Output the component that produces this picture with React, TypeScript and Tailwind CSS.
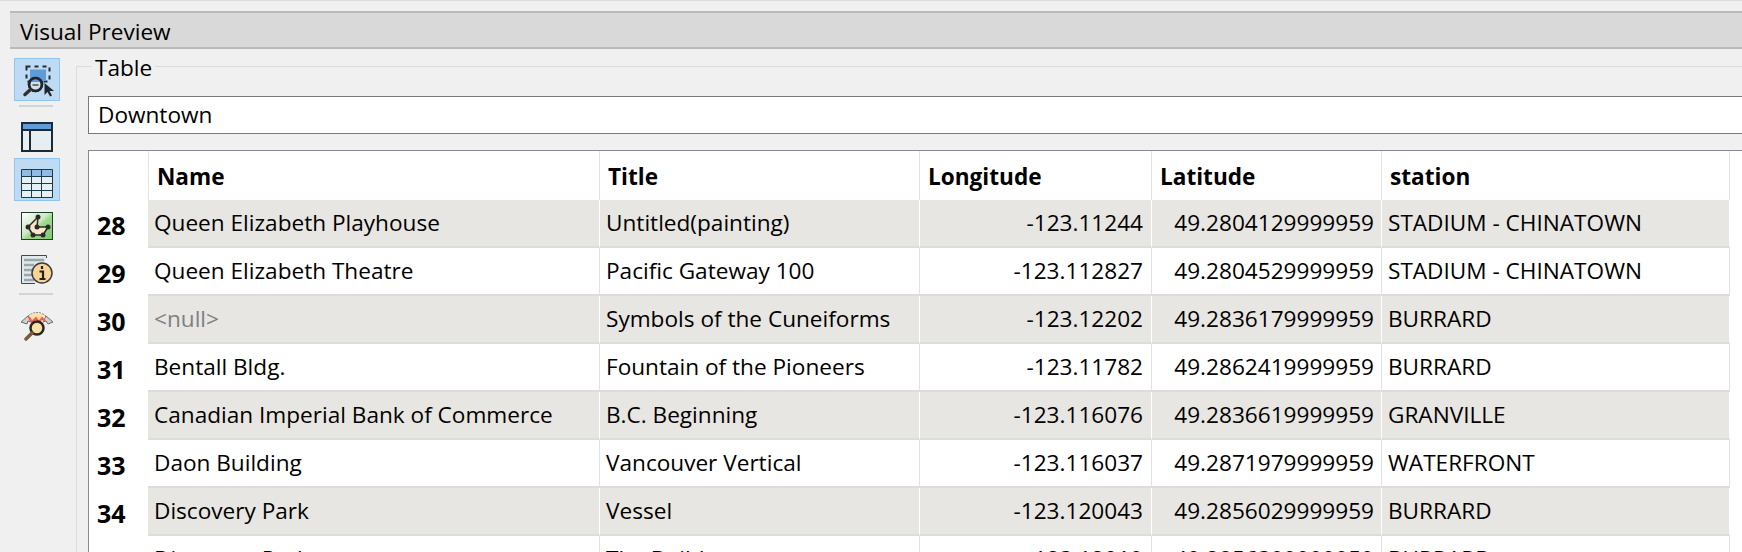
import { Fragment } from "react";

const rows = [
  ["28", "Queen Elizabeth Playhouse", "Untitled(painting)", "-123.11244", "49.2804129999959", "STADIUM - CHINATOWN"],
  ["29", "Queen Elizabeth Theatre", "Pacific Gateway 100", "-123.112827", "49.2804529999959", "STADIUM - CHINATOWN"],
  ["30", "<null>", "Symbols of the Cuneiforms", "-123.12202", "49.2836179999959", "BURRARD"],
  ["31", "Bentall Bldg.", "Fountain of the Pioneers", "-123.11782", "49.2862419999959", "BURRARD"],
  ["32", "Canadian Imperial Bank of Commerce", "B.C. Beginning", "-123.116076", "49.2836619999959", "GRANVILLE"],
  ["33", "Daon Building", "Vancouver Vertical", "-123.116037", "49.2871979999959", "WATERFRONT"],
  ["34", "Discovery Park", "Vessel", "-123.120043", "49.2856029999959", "BURRARD"],
  ["35", "Discovery Park", "The Builders", "-123.12019", "49.2856399999959", "BURRARD"],
];

function ZoomIcon() {
  return (
    <svg width="34" height="34" viewBox="0 0 34 34">
      <rect x="6.500" y="3.500" width="23" height="15" fill="none" stroke="#1d2f3a" strokeWidth="2" strokeDasharray="4 4" />
      <rect x="10" y="6.500" width="16" height="11.500" fill="#5f9bd6" />
      <circle cx="15.500" cy="21.500" r="6.500" fill="#cfe2f0" stroke="#20262b" strokeWidth="2.500" />
      <path d="M15.500 15a6.500 6.500 0 0 1 6 4h-12a6.500 6.500 0 0 1 6-4z" fill="#5f9bd6" />
      <circle cx="15.500" cy="21.500" r="6.500" fill="none" stroke="#20262b" strokeWidth="2.500" />
      <path d="M12.500 22h6" stroke="#4a4f54" strokeWidth="1.500" />
      <path d="M10.500 26.500 5 31.500" stroke="#33302c" strokeWidth="3.500" strokeLinecap="round" />
      <path d="M24.500 20v12l3-3 2.500 4.500 2-1-2.500-4.500h4.500z" fill="#20262b" />
    </svg>
  );
}

function PanelIcon() {
  return (
    <svg width="32" height="30" viewBox="0 0 32 30">
      <rect x="1" y="1" width="30" height="28" fill="#e6eef1" stroke="#1b2b36" strokeWidth="2" />
      <rect x="2" y="2" width="28" height="5" fill="#5f9bd6" />
      <path d="M1 8h30M9 8v21" stroke="#1b2b36" strokeWidth="2" />
    </svg>
  );
}

function GridIcon() {
  return (
    <svg className="mt-[8px]" width="32" height="29" viewBox="0 0 32 29">
      <rect x="1" y="1" width="30" height="27" fill="#e6eff2" />
      <rect x="1" y="1" width="30" height="6" fill="#8dbce6" />
      <path d="M.500.500h31v28H.500zM.500 7.500h31M.500 14.500h31M.500 21.500h31M10.500.500v28M20.500.500v28" fill="none" stroke="#1b3a4b" />
    </svg>
  );
}

function GraphIcon() {
  return (
    <svg width="32" height="28" viewBox="0 0 32 28">
      <defs>
        <linearGradient id="graphBg" x1="0" y1="0" x2="1" y2="1">
          <stop offset="0" stopColor="#ffffff" />
          <stop offset=".45" stopColor="#cfe8c6" />
          <stop offset=".55" stopColor="#9fd88e" />
          <stop offset="1" stopColor="#7cc96b" />
        </linearGradient>
      </defs>
      <rect x=".500" y=".500" width="31" height="27" fill="url(#graphBg)" stroke="#1c3f2c" />
      <path d="M17 5 7 15l5 8h10l5-8H16z" fill="#f8e6c8" stroke="#2a2a2a" strokeWidth="1.500" strokeLinejoin="round" />
      <circle cx="17" cy="5" r="2.500" fill="#2a2a2a" />
      <circle cx="7" cy="15" r="2.500" fill="#2a2a2a" />
      <circle cx="16" cy="15" r="2.500" fill="#2a2a2a" />
      <circle cx="27" cy="15" r="2.500" fill="#2a2a2a" />
      <circle cx="12" cy="23" r="2.500" fill="#2a2a2a" />
      <circle cx="22" cy="23" r="2.500" fill="#2a2a2a" />
    </svg>
  );
}

function InfoIcon() {
  return (
    <svg width="32" height="29" viewBox="0 0 32 29">
      <path d="M25.500 3V.500H.500v28H14" fill="#e3e8ea" stroke="#3c4a54" />
      <path d="M3 5h20M3 10h10M3 15h8M3 20h8M3 25h10" stroke="#9aa6ad" strokeWidth="2.500" />
      <circle cx="21" cy="18" r="10" fill="#f6d596" stroke="#3c3c3c" strokeWidth="1.500" />
      <path d="M21 11v3M18.500 16.500H22v7M18.500 24h6" fill="none" stroke="#222" strokeWidth="2.200" />
    </svg>
  );
}

function ProbeIcon() {
  return (
    <svg width="34" height="34" viewBox="0 0 34 34">
      <path d="M8 9q9-7 18 0" fill="none" stroke="#777" strokeDasharray="2 1" />
      <path d="M1 15 8 9l3 6-3-1-1 3zM33 15l-7-6-3 6 3-1 2 3z" fill="#d4d0cc" stroke="#6e6a66" />
      <path d="M9 9q8-6 16 0l-2 6H11z" fill="#f9e2a4" />
      <path d="M9 10l3 5 4-4 3 4 3-4 3 3" fill="none" stroke="#f25b5b" strokeWidth="2" />
      <circle cx="17" cy="21" r="6.500" fill="#f9e2a4" stroke="#2c2622" strokeWidth="2.500" />
      <path d="M12 26 6 32" stroke="#7a5a3a" strokeWidth="3.500" strokeLinecap="round" />
    </svg>
  );
}

function ToolButton({ active, children }: { active?: boolean; children: React.ReactNode }) {
  return (
    <div
      className={
        active
          ? "w-[46px] h-[43px] shrink-0 flex items-center justify-center bg-[#bfdbf3] border border-[#8fc5f5]"
          : "w-[46px] h-[43px] shrink-0 flex items-center justify-center"
      }
    >
      {children}
    </div>
  );
}

export default function App() {
  return (
    <div className="w-[1742px] h-[552px] overflow-hidden bg-[#f0f0f0] text-[22.6px] leading-[30px] text-black font-['Open_Sans','Noto_Sans',sans-serif]">
      <div className="h-[1px] bg-[#dcdcdc]" />
      <div className="ml-[10px] mt-[10px] h-[38px] bg-[#d9d9d9] border-y-2 border-[#b9b9b9] pl-[10px] pt-[3px] flex items-center">
        Visual Preview
      </div>

      <div className="flex">
        <div className="w-[76px] shrink-0 pl-[14px] pt-[9px] flex flex-col">
          <ToolButton active><ZoomIcon /></ToolButton>
          <div className="w-[34px] h-[2px] bg-[#d4d4d4] ml-[5px] mt-[4px] mb-[8px]" />
          <ToolButton><PanelIcon /></ToolButton>
          <ToolButton active><GridIcon /></ToolButton>
          <div className="h-[3px] shrink-0" />
          <ToolButton><GraphIcon /></ToolButton>
          <div className="h-[1px] shrink-0" />
          <ToolButton><InfoIcon /></ToolButton>
          <div className="w-[34px] h-[2px] bg-[#d4d4d4] ml-[5px] mt-[2px] mb-[7px]" />
          <ToolButton><ProbeIcon /></ToolButton>
        </div>

        <div className="relative flex-1 mt-[17px] border-l border-t border-[#dcdcdc] pl-[11px] pt-[29px] min-w-0">
          <div className="absolute left-[15px] top-[-14px] bg-[#f0f0f0] px-[3px]">Table</div>
          <div className="h-[38px] bg-white border border-[#7a7a7a] border-r-0 pl-[9px] flex items-center">
            Downtown
          </div>
          <div className="mt-[16px] h-[420px] bg-white border-l border-t border-[#8a8a96] flex items-start">
            <div className="w-[59px] shrink-0">
              <div className="h-[49px]" />
              {rows.map((r) => (
                <div key={r[0]} className="h-[48px] flex items-center pl-[8px] pt-[1px] font-bold text-[25px]">{r[0]}</div>
              ))}
            </div>
            <div className="grid grid-cols-[452px_320px_232px_230px_348px] w-[1582px] shrink-0">
              {["Name", "Title", "Longitude", "Latitude", "station"].map((h, i) => (
                <div
                  key={h}
                  className={
                    (i === 0 ? "border-l " : "") +
                    "h-[49px] flex items-center pl-[8px] pt-[3px] font-bold border-r border-[#e3e3e3]"
                  }
                >
                  {h}
                </div>
              ))}
              {rows.map((r, i) => (
                <Fragment key={r[0]}>
                  {r.slice(1).map((c, j) => (
                    <div
                      key={j}
                      className={
                        (i % 2 === 0 ? "bg-[#e7e6e2] border-r-white " : "bg-white border-r-[#e2e2e2] ") +
                        "h-[48px] flex items-center whitespace-nowrap border-r border-b-2 border-b-[#dcdcdc] " +
                        (j === 2 ? "justify-end pr-[8px] " : j === 3 ? "justify-end pr-[7px] " : "pl-[6px] ") +
                        (c === "<null>" ? "text-[#808080]" : "")
                      }
                    >
                      {c}
                    </div>
                  ))}
                </Fragment>
              ))}
            </div>
          </div>
        </div>
      </div>
    </div>
  );
}
